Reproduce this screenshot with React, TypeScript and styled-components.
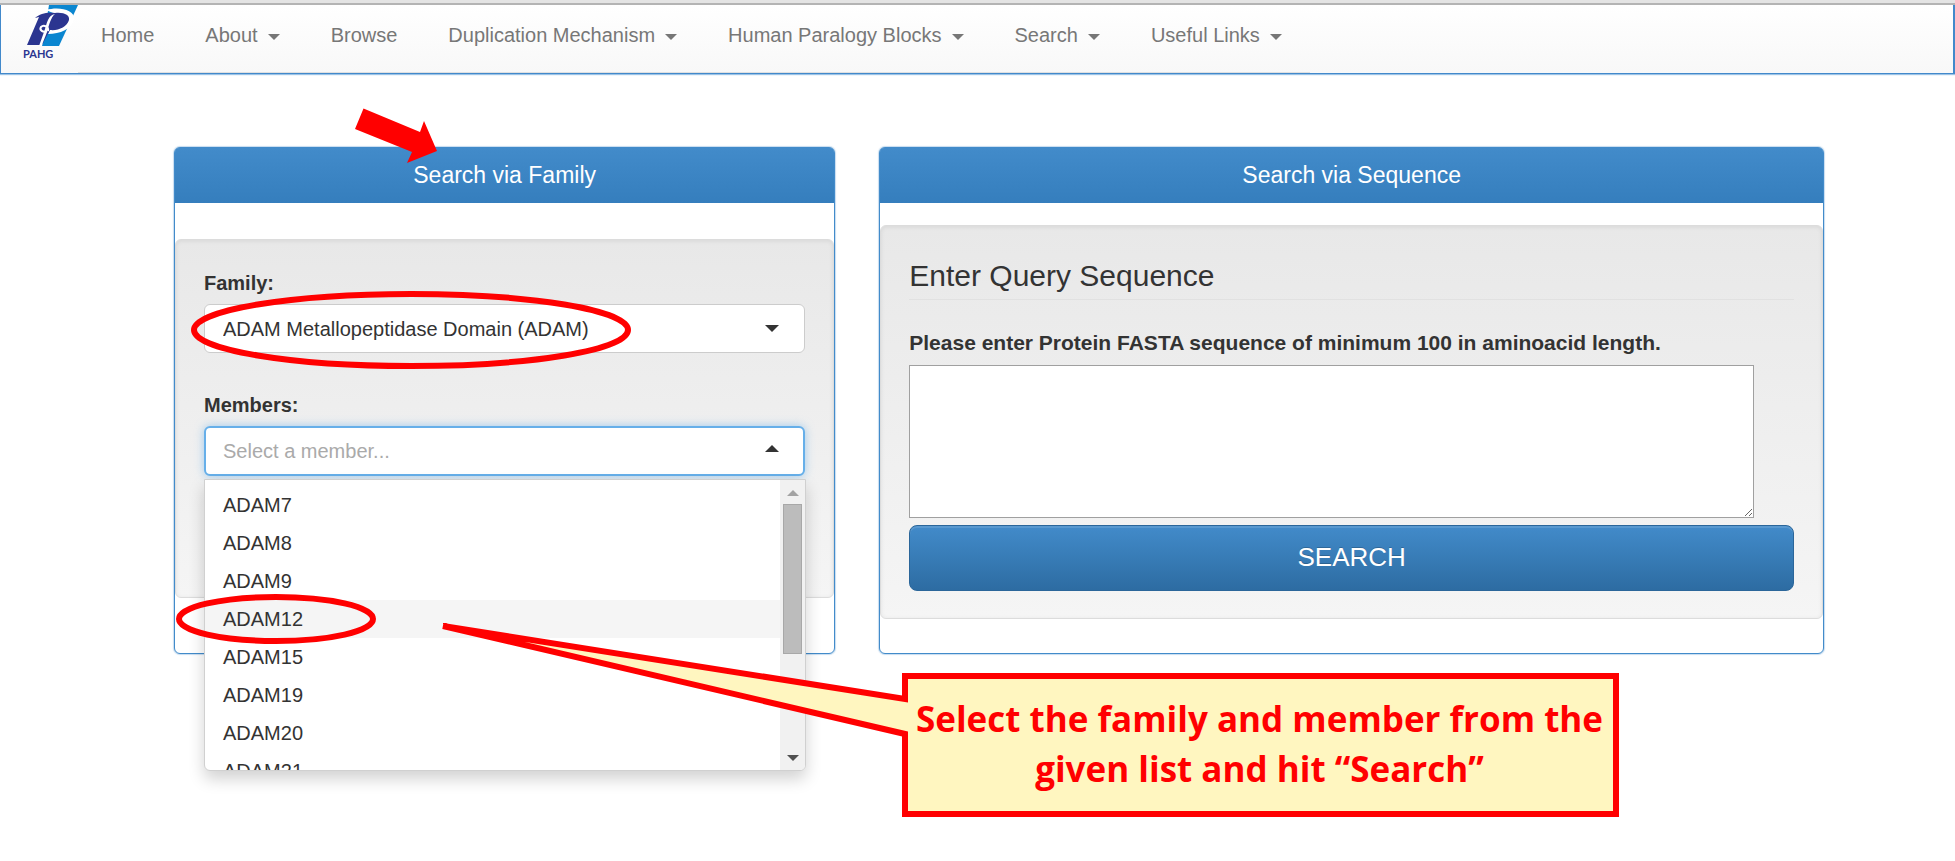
import React from "react";
import styled, { createGlobalStyle, css } from "styled-components";

const GlobalStyle = createGlobalStyle`
  *, *::before, *::after { box-sizing: border-box; }
  body {
    margin: 0;
    background: #fff;
    color: #333;
    font-family: "Liberation Sans", Arial, Helvetica, sans-serif;
    font-size: 20px;
  }
`;

const Page = styled.div`
  min-height: 100vh;
`;

const TopStrip = styled.div`
  height: 5px;
  background: #e4e4e4;
  border-bottom: 2px solid #b4b4b4;
`;

const NavBar = styled.nav`
  display: flex;
  align-items: flex-start;
  height: 69px;
  border: solid #4289cb;
  border-width: 0 2px 1px 1px;
  background: linear-gradient(#fff, #f8f8f8);
  box-shadow: 0 1px 1px #9cc3e6;
`;

const Brand = styled.a`
  display: block;
  width: 77px;
  height: 68px;
`;

const Menu = styled.ul`
  display: flex;
  margin: 0;
  padding: 0;
  list-style: none;
  border-bottom: 1px solid #e0e0e0;
`;

const MenuLink = styled.a`
  display: flex;
  align-items: center;
  height: 67px;
  padding: 0 28px 6px 23px;
  color: #777;
  white-space: nowrap;
  text-decoration: none;
`;

const Caret = styled.span<{ $up?: boolean }>`
  flex: none;
  border: 6px solid transparent;
  ${(p) =>
    p.$up
      ? css`border-top: 0; border-bottom-color: currentColor;`
      : css`border-bottom: 0; border-top-color: currentColor;`}
`;

const MenuCaret = styled(Caret)`
  margin: 2px 0 0 10px;
`;

const Main = styled.main`
  display: grid;
  grid-template-columns: 7fr 10fr;
  gap: 44px;
  padding: 73px 131px 0 174px;
`;

const Panel = styled.section`
  position: relative;
  border: 1px solid #428bca;
  border-radius: 6px;
  background: #fff;
  box-shadow: 0 0 1px 1px rgba(66, 139, 202, 0.3);
`;

const PanelTitle = styled.h2`
  margin: 0;
  height: 55px;
  border-radius: 4px 4px 0 0;
  background: linear-gradient(#428bca, #357ebd);
  color: #fff;
  font-size: 23px;
  font-weight: 400;
  line-height: 54px;
  text-align: center;
`;

const Well = styled.form<{ $gapTop: number; $minHeight?: number }>`
  margin: ${(p) => p.$gapTop}px 0 34px;
  min-height: ${(p) => p.$minHeight ?? 0}px;
  padding: 29px 28px 27px;
  border: 1px solid #dcdcdc;
  border-radius: 6px;
  background: linear-gradient(#e8e8e8, #f5f5f5);
  box-shadow: inset 0 1px 4px rgba(0, 0, 0, 0.08);
`;

const Field = styled.div`
  margin-bottom: 38px;
`;

const Label = styled.label`
  display: block;
  margin-bottom: 7px;
  font-weight: 700;
  line-height: 28px;
`;

const Hint = styled(Label)`
  margin-bottom: 8px;
  font-size: 21px;
`;

const Control = styled.div`
  position: relative;
`;

const controlBox = css`
  display: block;
  width: 100%;
  height: 49px;
  margin: 0;
  padding: 0 60px 0 18px;
  border: 1px solid #ccc;
  border-radius: 6px;
  background: #fff;
  color: #333;
  font: inherit;
  outline: 0;
  appearance: none;
`;

const Select = styled.select`
  ${controlBox}
`;

const ComboInput = styled.input`
  ${controlBox}
  height: 50px;
  padding-left: 17px;
  border: 2px solid #66afe9;
  box-shadow: 0 0 10px rgba(102, 175, 233, 0.6);
  &::placeholder { color: #aaa; opacity: 1; }
`;

const ControlCaret = styled(Caret)`
  position: absolute;
  top: ${(p) => (p.$up ? 19 : 21)}px;
  right: 26px;
  border-left-width: 7px;
  border-right-width: 7px;
  border-top-width: ${(p) => (p.$up ? 0 : 7)}px;
  border-bottom-width: ${(p) => (p.$up ? 7 : 0)}px;
  pointer-events: none;
`;

const Dropdown = styled.div`
  position: absolute;
  top: 53px;
  left: 0;
  right: -1px;
  z-index: 2;
  display: flex;
  height: 292px;
  border: 1px solid #d0d0d0;
  border-radius: 0 0 6px 6px;
  background: #fff;
  box-shadow: 0 8px 16px rgba(0, 0, 0, 0.18);
  overflow: hidden;
`;

const Options = styled.ul`
  flex: 1;
  margin: 0;
  padding: 6px 0 0;
  list-style: none;
  overflow: hidden;
`;

const Option = styled.li<{ $active: boolean }>`
  padding-left: 18px;
  line-height: 38px;
  background: ${(p) => (p.$active ? "#f5f5f5" : "transparent")};
`;

const ScrollTrack = styled.div`
  display: flex;
  flex-direction: column;
  align-items: center;
  justify-content: space-between;
  width: 25px;
  padding: 10px 0 9px;
  background: #f1f1f1;
`;

const ScrollThumb = styled.div`
  width: 19px;
  height: 150px;
  margin: 8px 0 auto;
  border: 1px solid #a8a8a8;
  background: #bcbcbc;
`;

const ScrollArrow = styled(Caret)<{ $muted?: boolean }>`
  color: ${(p) => (p.$muted ? "#a3a3a3" : "#505050")};
`;

const Legend = styled.h3`
  margin: 0 0 29px;
  height: 45px;
  border-bottom: 1px solid #e1e1e1;
  font-size: 30px;
  font-weight: 400;
  line-height: 42px;
`;

const Sequence = styled.textarea`
  display: block;
  width: calc(100% - 40px);
  height: 153px;
  margin: 0 0 7px;
  border: 1px solid #a0a0a0;
  outline: 0;
  font: inherit;
`;

const SearchButton = styled.button`
  display: block;
  width: 100%;
  height: 66px;
  padding: 0 0 2px;
  border: 1px solid #2b669a;
  border-radius: 8px;
  background: linear-gradient(#428bca, #2d6ca2);
  box-shadow: inset 0 2px 0 rgba(255, 255, 255, 0.12);
  color: #fff;
  font: inherit;
  font-size: 26px;
  text-shadow: 0 -1px 0 rgba(0, 0, 0, 0.2);
`;

const Mark = styled.svg<{ $x: number; $y: number }>`
  position: absolute;
  left: ${(p) => p.$x}px;
  top: ${(p) => p.$y}px;
  z-index: 3;
  pointer-events: none;
`;

const Callout = styled.aside`
  position: absolute;
  left: 265px;
  top: 467px;
  z-index: 4;
  width: 1180px;
  pointer-events: none;
`;

const CalloutShape = styled.svg`
  display: block;
`;

const CalloutText = styled.p`
  position: absolute;
  top: 79px;
  right: 8px;
  width: 705px;
  margin: 0;
  color: #f00;
  font-family: "Open Sans", "Noto Sans", sans-serif;
  font-size: 35px;
  font-weight: 700;
  line-height: 50px;
  text-align: center;
`;

const MENU = [
  { label: "Home", drop: false },
  { label: "About", drop: true },
  { label: "Browse", drop: false },
  { label: "Duplication Mechanism", drop: true },
  { label: "Human Paralogy Blocks", drop: true },
  { label: "Search", drop: true },
  { label: "Useful Links", drop: true },
];

const MEMBERS = ["ADAM7", "ADAM8", "ADAM9", "ADAM12", "ADAM15", "ADAM19", "ADAM20", "ADAM21"];

function Logo() {
  return (
    <svg width="77" height="66" viewBox="0 0 77 66" role="img" aria-label="PAHG">
      <path d="M48 0H77L58 41H41Z" fill="#0a86d0" />
      <path d="M45 5C58 1 74 5 73 14C71 24 59 29 47 29L49 24L52 8Z" fill="#fff" />
      <path d="M34 13C39 8 47 7 54 8C63 7 69 10 68 15C66 22 57 26 49 25L41 40H26L38 12Z" fill="#2b3590" />
      <path d="M54 9C50 12 48 20 46 27C44 33 42 36 41 41H38L43 27C46 18 47 10 54 9Z" fill="#fff" />
      <path d="M46 26C42 28 38 25 40 22C43 19 48 22 47 26" fill="none" stroke="#fff" strokeWidth="2" />
      <text x="22" y="53" fontSize="11" fontWeight="700" fontFamily="Lato, sans-serif" fill="#2b3590">PAHG</text>
    </svg>
  );
}

function Ring({ x, y, w, h }: { x: number; y: number; w: number; h: number }) {
  return (
    <Mark $x={x} $y={y} width={w} height={h} aria-hidden="true">
      <ellipse cx={w / 2} cy={h / 2} rx={w / 2 - 3} ry={h / 2 - 3} fill="none" stroke="#f00" strokeWidth="6" />
    </Mark>
  );
}

export default function App() {
  return (
    <Page>
      <GlobalStyle />
      <TopStrip />
      <NavBar>
        <Brand href="#"><Logo /></Brand>
        <Menu>
          {MENU.map((m) => (
            <li key={m.label}>
              <MenuLink href="#">{m.label}{m.drop && <MenuCaret />}</MenuLink>
            </li>
          ))}
        </Menu>
      </NavBar>
      <Main>
        <Panel>
          <PanelTitle>Search via Family</PanelTitle>
          <Well $gapTop={36} $minHeight={359}>
            <Field>
              <Label htmlFor="family">Family:</Label>
              <Control>
                <Select id="family">
                  <option>ADAM Metallopeptidase Domain (ADAM)</option>
                </Select>
                <ControlCaret />
                <Ring x={-13} y={-13} w={440} h={78} />
              </Control>
            </Field>
            <Field>
              <Label htmlFor="members">Members:</Label>
              <Control>
                <ComboInput id="members" role="combobox" aria-expanded="true" aria-controls="member-list" placeholder="Select a member..." />
                <ControlCaret $up />
                <Dropdown>
                  <Options id="member-list" role="listbox">
                    {MEMBERS.map((m) => (
                      <Option key={m} role="option" $active={m === "ADAM12"} aria-selected={m === "ADAM12"}>{m}</Option>
                    ))}
                  </Options>
                  <ScrollTrack>
                    <ScrollArrow $up $muted />
                    <ScrollThumb />
                    <ScrollArrow />
                  </ScrollTrack>
                </Dropdown>
                <Ring x={-28} y={168} w={200} h={50} />
              </Control>
            </Field>
          </Well>
          <Mark $x={178} $y={-41} width="86" height="58" aria-hidden="true">
            <path d="M10.500 1.500L67 25L71 14L84 44L54 56L59 45L2 22Z" fill="#f00" />
          </Mark>
          <Callout>
            <CalloutShape width="1180" height="204" viewBox="440 615 1180 204" aria-hidden="true">
              <path d="M905 676H1616V814H905V734L443 626L905 699Z" fill="#fff6c0" stroke="#f00" strokeWidth="6" />
            </CalloutShape>
            <CalloutText>Select the family and member from the given list and hit “Search”</CalloutText>
          </Callout>
        </Panel>
        <Panel>
          <PanelTitle>Search via Sequence</PanelTitle>
          <Well $gapTop={22}>
            <Legend>Enter Query Sequence</Legend>
            <Hint htmlFor="sequence">Please enter Protein FASTA sequence of minimum 100 in aminoacid length.</Hint>
            <Sequence id="sequence" />
            <SearchButton type="button">SEARCH</SearchButton>
          </Well>
        </Panel>
      </Main>
    </Page>
  );
}
